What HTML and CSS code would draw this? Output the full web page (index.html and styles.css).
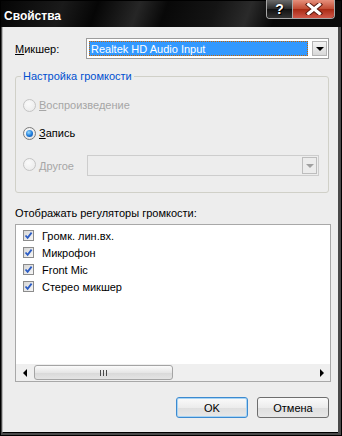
FILE: index.html
```html
<!DOCTYPE html>
<html>
<head>
  <title>Свойства</title>
  <link rel="stylesheet" href="styles.css">
</head>
<body>
  <div class="window">
    <div class="titlebar">
      <span class="title">Свойства</span>
      <div class="caption-buttons">
        <span class="cap-btn help">?</span>
        <span class="cap-btn close">
          <svg width="18" height="12" viewBox="0 0 18 12">
            <path d="M3.5 1.5 L14.5 10.5 M14.5 1.5 L3.5 10.5" stroke="#5a1a10" stroke-width="5" stroke-linecap="square"/>
            <path d="M3.5 1.5 L14.5 10.5 M14.5 1.5 L3.5 10.5" stroke="#fff" stroke-width="3" stroke-linecap="square"/>
          </svg>
        </span>
      </div>
    </div>
    <div class="client">
      <div class="mixer-row">
        <label class="mixer-label"><u>М</u>икшер:</label>
        <div class="combo">
          <div class="combo-value">Realtek HD Audio Input</div>
          <div class="combo-btn"><span class="arrow"></span></div>
        </div>
      </div>

      <fieldset class="group">
        <legend>Настройка громкости</legend>
        <div class="radio-row disabled">
          <span class="radio"></span>
          <span><u>В</u>оспроизведение</span>
        </div>
        <div class="radio-row second">
          <span class="radio checked"></span>
          <span><u>З</u>апись</span>
        </div>
        <div class="radio-row third disabled">
          <span class="radio"></span>
          <span class="other-label"><u>Д</u>ругое</span>
          <div class="combo combo-disabled">
            <div class="combo-btn"><span class="arrow"></span></div>
          </div>
        </div>
      </fieldset>

      <div class="list-label">Отображать регуляторы громкости:</div>
      <div class="list">
        <div class="items">
          <div class="item"><span class="check"><svg width="9" height="9" viewBox="0 0 9 9"><path d="M1.5 4.5 L3.6 6.8 L7.6 1.6" fill="none" stroke="#2b5cc4" stroke-width="1.8"/></svg></span>Громк. лин.вх.</div>
          <div class="item"><span class="check"><svg width="9" height="9" viewBox="0 0 9 9"><path d="M1.5 4.5 L3.6 6.8 L7.6 1.6" fill="none" stroke="#2b5cc4" stroke-width="1.8"/></svg></span>Микрофон</div>
          <div class="item"><span class="check"><svg width="9" height="9" viewBox="0 0 9 9"><path d="M1.5 4.5 L3.6 6.8 L7.6 1.6" fill="none" stroke="#2b5cc4" stroke-width="1.8"/></svg></span>Front Mic</div>
          <div class="item"><span class="check"><svg width="9" height="9" viewBox="0 0 9 9"><path d="M1.5 4.5 L3.6 6.8 L7.6 1.6" fill="none" stroke="#2b5cc4" stroke-width="1.8"/></svg></span>Стерео микшер</div>
        </div>
        <div class="hscroll">
          <span class="sb-btn"><span class="sb-left"></span></span>
          <span class="sb-thumb"><span class="grip"></span></span>
          <span class="sb-track"></span>
          <span class="sb-btn"><span class="sb-right"></span></span>
        </div>
      </div>

      <div class="buttons">
        <button class="btn default">OK</button>
        <button class="btn">Отмена</button>
      </div>
    </div>
  </div>
</body>
</html>
```

FILE: styles.css
```css
body {
  margin: 0;
  padding: 0;
  font-family: "Liberation Sans", Arial, sans-serif;
  font-size: 11px;
  color: #000;
}

.window {
  width: 342px;
  height: 436px;
  box-sizing: border-box;
  border: 1px solid #000;
  background-color: #4a4a4a;
  display: flex;
  flex-direction: column;
}

.titlebar {
  height: 26px;
  flex-shrink: 0;
  display: flex;
  justify-content: space-between;
  align-items: flex-start;
  background: linear-gradient(110deg, #050505 0%, #1a1a1a 18%, #060606 28%, #262626 40%, #080808 48%, #141414 62%, #2a2a2a 72%, #070707 80%, #0c0c0c 100%);
}

.title {
  color: #fff;
  font-weight: bold;
  font-size: 12px;
  margin: 8px 0 0 3px;
}

.caption-buttons {
  display: flex;
  margin: -1px 6px 0 0;
  border: 1px solid #a8a8a8;
  border-top: none;
  border-radius: 0 0 4px 4px;
  overflow: hidden;
}

.cap-btn {
  height: 18px;
  display: flex;
  align-items: center;
  justify-content: center;
}

.help {
  width: 25px;
  color: #fff;
  font-weight: bold;
  font-size: 14px;
  text-shadow: 0 0 1px #000, 1px 1px 0 #000;
  background: linear-gradient(#6a6a6a, #2a2a2a 50%, #111 51%, #333);
  border-right: 1px solid #a8a8a8;
}

.close {
  width: 41px;
  background: linear-gradient(#e6907c, #c04a32 50%, #a82a14 51%, #d0584a);
}

.client {
  flex: 1;
  margin: 0 3px 3px 2px;
  background-color: #ededed;
  box-shadow: -1px 0 0 #b8b8b8, 0 1px 0 #000;
  padding: 11px 9px 0 12px;
}

.mixer-row {
  display: flex;
  align-items: center;
}

.mixer-label {
  width: 71px;
}

.combo {
  width: 243px;
  height: 21px;
  box-sizing: border-box;
  border: 1px solid #9c9c9c;
  background-color: #fff;
  padding: 2px 1px 2px 2px;
  display: flex;
  justify-content: space-between;
}

.combo-value {
  width: 219px;
  box-sizing: border-box;
  background-color: #3399ff;
  color: #fff;
  outline: 1px dotted #c86400;
  outline-offset: -1px;
  padding: 1px 0 0 2px;
  line-height: 14px;
}

.combo-btn {
  width: 15px;
  box-sizing: border-box;
  border: 1px solid #b4b4b4;
  background: linear-gradient(#f4f4f4, #d8d8d8);
  display: flex;
  align-items: center;
  justify-content: center;
}

.arrow {
  width: 0;
  height: 0;
  border-left: 4px solid transparent;
  border-right: 4px solid transparent;
  border-top: 4px solid #000;
  margin-top: 1px;
}

.group {
  width: 314px;
  box-sizing: border-box;
  margin: 10px 0 0 0;
  padding: 14px 0 16px 7px;
  border: 1px solid #d0d0c8;
  border-radius: 3px;
}

.group legend {
  color: #0050d0;
  padding: 0 2px;
  margin-left: -2px;
  line-height: 14px;
}

.radio-row {
  display: flex;
  align-items: center;
  gap: 3px;
  height: 16px;
}

.radio-row.second {
  margin-top: 12px;
}

.radio-row.third {
  margin-top: 14px;
  height: 21px;
}

.radio-row.third .radio {
  margin-top: -2px;
}

.disabled {
  color: #a6a6a6;
}

.radio {
  width: 13px;
  height: 13px;
  box-sizing: border-box;
  border-radius: 50%;
  border: 1px solid #7a7a7a;
  background: radial-gradient(circle at 40% 35%, #ffffff, #dcdcdc);
  display: flex;
  align-items: center;
  justify-content: center;
}

.disabled .radio {
  border-color: #c4c4c4;
  background: radial-gradient(circle at 40% 35%, #fafafa, #e8e8e8);
}

.radio.checked::after {
  content: "";
  width: 7px;
  height: 7px;
  border-radius: 50%;
  background: radial-gradient(circle at 40% 35%, #9adcff, #1b78d8 55%, #0a4aa0);
}

.other-label {
  width: 45px;
}

.combo-disabled {
  width: 232px;
  border-color: #cdcdcd;
  background-color: #ededed;
  justify-content: flex-end;
  padding: 1px 1px 1px 0;
}

.combo-disabled .combo-btn {
  border-color: #bdbdbd;
  background: #ececec;
}

.combo-disabled .arrow {
  border-top-color: #a0a0a0;
}

.list-label {
  margin-top: 13px;
  line-height: 14px;
}

.list {
  width: 316px;
  height: 158px;
  box-sizing: border-box;
  margin-top: 4px;
  border: 1px solid #a8a8a8;
  background-color: #fff;
  display: flex;
  flex-direction: column;
}

.items {
  padding: 2px 0 0 7px;
}

.item {
  height: 17px;
  display: flex;
  align-items: center;
  gap: 8px;
}

.check {
  width: 11px;
  height: 11px;
  box-sizing: border-box;
  border: 1px solid #8c8c8c;
  background: linear-gradient(135deg, #d6d6d6, #f6f6f6);
  display: flex;
  align-items: center;
  justify-content: center;
}

.hscroll {
  margin-top: auto;
  height: 17px;
  display: flex;
  align-items: center;
  background-color: #efefef;
}

.sb-btn {
  width: 17px;
  height: 17px;
  display: flex;
  align-items: center;
  justify-content: center;
}

.sb-left {
  border-top: 4px solid transparent;
  border-bottom: 4px solid transparent;
  border-right: 4px solid #000;
}

.sb-right {
  border-top: 4px solid transparent;
  border-bottom: 4px solid transparent;
  border-left: 4px solid #000;
}

.sb-thumb {
  width: 139px;
  height: 15px;
  box-sizing: border-box;
  margin-left: 1px;
  border: 1px solid #a4a4a4;
  border-radius: 3px;
  background: linear-gradient(#fbfbfb, #e6e6e6 50%, #d8d8d8 51%, #e4e4e4);
  display: flex;
  align-items: center;
  justify-content: center;
}

.grip {
  width: 7px;
  height: 6px;
  background: repeating-linear-gradient(90deg, #4a4a4a 0 1px, transparent 1px 3px);
}

.sb-track {
  flex: 1;
}

.buttons {
  display: flex;
  justify-content: flex-end;
  gap: 9px;
  margin-top: 15px;
}

.btn {
  width: 72px;
  height: 21px;
  box-sizing: border-box;
  border: 1px solid #6e6e6e;
  border-radius: 3px;
  background: linear-gradient(#fafafa, #ececec 50%, #dedede 51%, #e8e8e8);
  font-family: "Liberation Sans", Arial, sans-serif;
  font-size: 11px;
  color: #000;
  padding: 0;
}

.btn.default {
  border-color: #3c8ad0;
  box-shadow: inset 0 0 0 1px #a8d4f4;
}
```
